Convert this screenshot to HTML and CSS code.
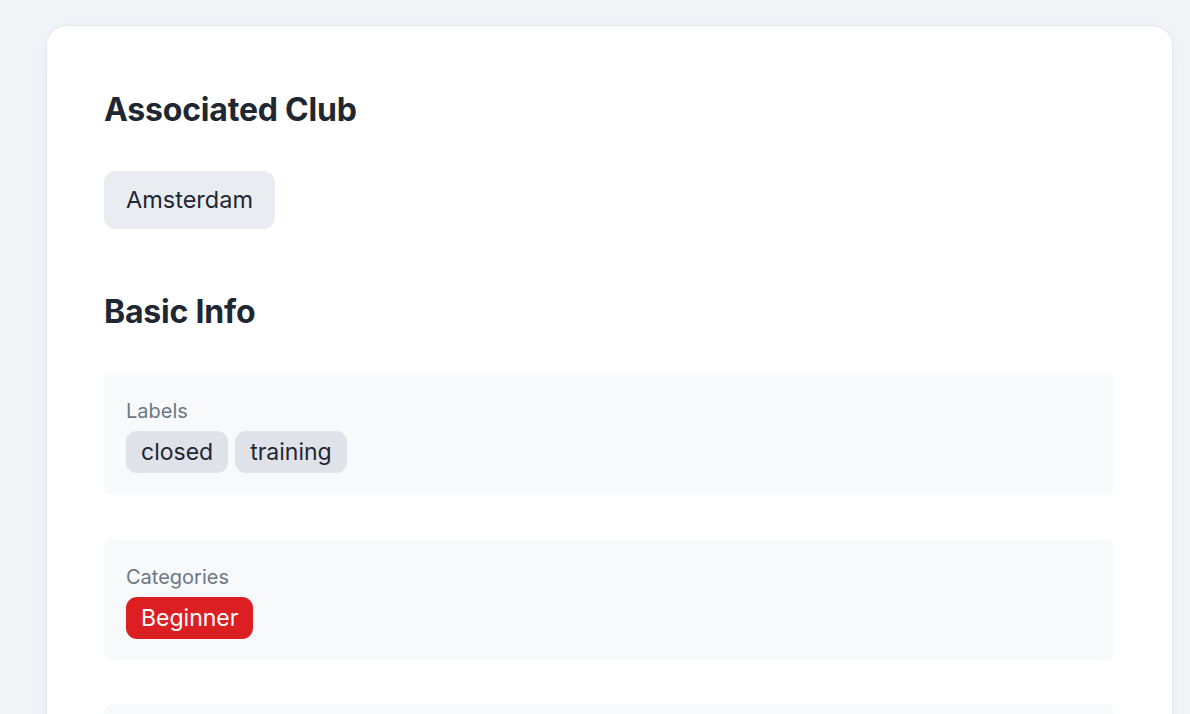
FILE: index.html
```html
<!DOCTYPE html>
<html lang="en">
<head>
    <meta charset="UTF-8">
    <meta name="viewport" content="width=device-width, initial-scale=1.0">
    <title>Team Details</title>
    <link rel="stylesheet" href="styles.css">
</head>
<body>
    <div class="card">
        <section class="block">
            <h2>Associated Club</h2>
            <div class="club-list">
                <span class="club">Amsterdam</span>
            </div>
        </section>

        <section class="block">
            <h2>Basic Info</h2>
            <div class="field">
                <div class="field-label">Labels</div>
                <div class="tags">
                    <span class="tag">closed</span>
                    <span class="tag">training</span>
                </div>
            </div>
            <div class="field">
                <div class="field-label">Categories</div>
                <div class="tags">
                    <span class="tag tag-red">Beginner</span>
                </div>
            </div>
            <div class="field">
                <div class="field-label">Level</div>
                <div class="tags">
                    <span class="tag">Open</span>
                </div>
            </div>
        </section>
    </div>
</body>
</html>
```

FILE: styles.css
```css
body {
    margin: 0;
    padding: 26px 18px 0 47px;
    background-color: #f3f6f9;
    color: #1e2732;
    font-family: Inter, 'Noto Sans', sans-serif;
    height: 714px;
    overflow: hidden;
    box-sizing: border-box;
}

.card {
    background: #ffffff;
    border-radius: 20px;
    box-shadow: 0 0 0 1px rgba(222, 228, 234, 0.7), 0 4px 24px rgba(30, 50, 70, 0.07);
    padding: 64px 58px 40px 57px;
}

h2 {
    margin: 0;
    font-size: 32px;
    line-height: 40px;
    font-weight: 700;
    color: #1e2732;
    letter-spacing: -0.2px;
}

.block + .block {
    margin-top: 63px;
}

.club-list {
    margin-top: 41px;
}

.club {
    display: inline-block;
    background: #e9edf1;
    border-radius: 12px;
    padding: 0 22px;
    height: 58px;
    line-height: 58px;
    font-size: 23.5px;
    color: #1e2732;
}

.field {
    margin-top: 41px;
    background: #f7f9fb;
    border-radius: 8px;
    padding: 24px 22px 21.5px 22px;
}

.field + .field {
    margin-top: 44px;
}

.field-label {
    font-size: 20px;
    line-height: 28px;
    color: #6b7785;
    margin-bottom: 6px;
}

.tags {
    display: flex;
    gap: 7px;
}

.tag {
    background: #dfe2e8;
    border-radius: 11px;
    padding: 0 15px;
    height: 42px;
    line-height: 42px;
    font-size: 23px;
    color: #1e2732;
}

.tag-red {
    background: #dc1f23;
    color: #ffffff;
}
```
